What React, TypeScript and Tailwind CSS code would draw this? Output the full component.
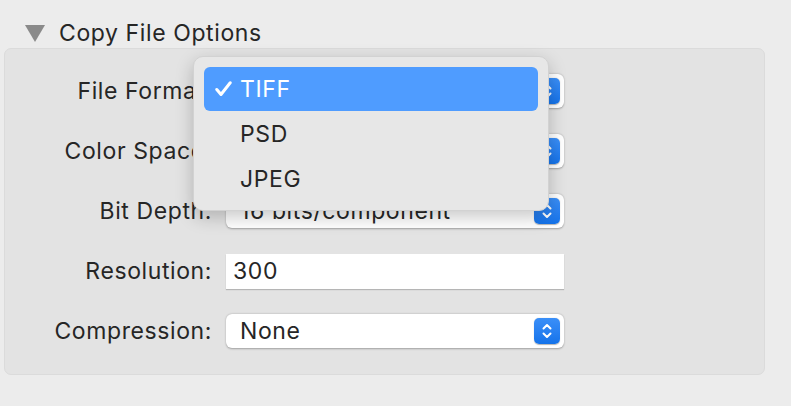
import React from "react";

function Stepper() {
  return (
    <div className="w-[26px] h-[26px] rounded-[5px] bg-gradient-to-b from-[#3a8ff8] to-[#1473ea] flex items-center justify-center shadow-[0_0.5px_1px_rgba(0,0,0,0.3)]">
      <svg width="12" height="18" viewBox="0 0 12 18" fill="none" stroke="white" strokeWidth="2" strokeLinecap="round" strokeLinejoin="round">
        <polyline points="2.5,6.5 6,3 9.5,6.5" />
        <polyline points="2.5,11.5 6,15 9.5,11.5" />
      </svg>
    </div>
  );
}

function Popup({ value }: { value: string }) {
  return (
    <div className="w-[338px] h-[34px] rounded-[6px] bg-white shadow-[0_0.5px_2px_rgba(0,0,0,0.3)] flex items-center pl-[14px] pr-[4px]">
      <span className="flex-1 truncate">{value}</span>
      <Stepper />
    </div>
  );
}

function Row({ label, children }: { label: string; children: React.ReactNode }) {
  return (
    <div className="flex items-center h-[36px]">
      <div className="w-[207px] text-right whitespace-nowrap">{label}</div>
      <div className="ml-[14px]">{children}</div>
    </div>
  );
}

export default function App() {
  return (
    <div className="w-[791px] h-[406px] bg-[#ececec] relative overflow-hidden font-['Inter',sans-serif] text-[23px] tracking-[0.6px] text-[#262626]">
      <div className="h-[48px] pt-[18px] pl-[25px] flex items-center">
        <div className="h-[30px] flex items-center">
          <svg width="20" height="17" viewBox="0 0 20 17">
            <polygon points="0,0 20,0 10,17" fill="#8a8a8a" />
          </svg>
          <span className="ml-[14px]">Copy File Options</span>
        </div>
      </div>
      <div className="ml-[4px] w-[761px] h-[327px] rounded-[7px] bg-[#e3e3e3] border border-[#dbdbdb] pt-[24px] flex flex-col gap-[24px]">
        <Row label="File Format:">
          <Popup value="" />
        </Row>
        <Row label="Color Space:">
          <Popup value="" />
        </Row>
        <Row label="Bit Depth:">
          <Popup value="16 bits/component" />
        </Row>
        <Row label="Resolution:">
          <div className="w-[338px] h-[35px] bg-white shadow-[0_1px_1px_rgba(0,0,0,0.2)] flex items-center pl-[7px]">300</div>
        </Row>
        <Row label="Compression:">
          <Popup value="None" />
        </Row>
      </div>

      <div className="absolute left-[193px] top-[56px] w-[356px] h-[155px] rounded-[10px] bg-[#e7e7e7] border border-[#d2d2d2] shadow-[0_6px_18px_rgba(0,0,0,0.22)] p-[10px] flex flex-col">
        <div className="h-[44px] shrink-0 rounded-[6px] bg-[#4f9cff] text-white flex items-center">
          <svg className="ml-[11px]" width="17" height="16" viewBox="0 0 17 16" fill="none" stroke="white" strokeWidth="3" strokeLinecap="round" strokeLinejoin="round">
            <polyline points="1.8,8.5 6,13.5 15.2,1.8" />
          </svg>
          <span className="ml-[8px]">TIFF</span>
        </div>
        <div className="h-[45px] shrink-0 flex items-center pl-[36px] pt-[2px]">PSD</div>
        <div className="h-[45px] shrink-0 flex items-center pl-[36px] pt-[2px]">JPEG</div>
      </div>
    </div>
  );
}
